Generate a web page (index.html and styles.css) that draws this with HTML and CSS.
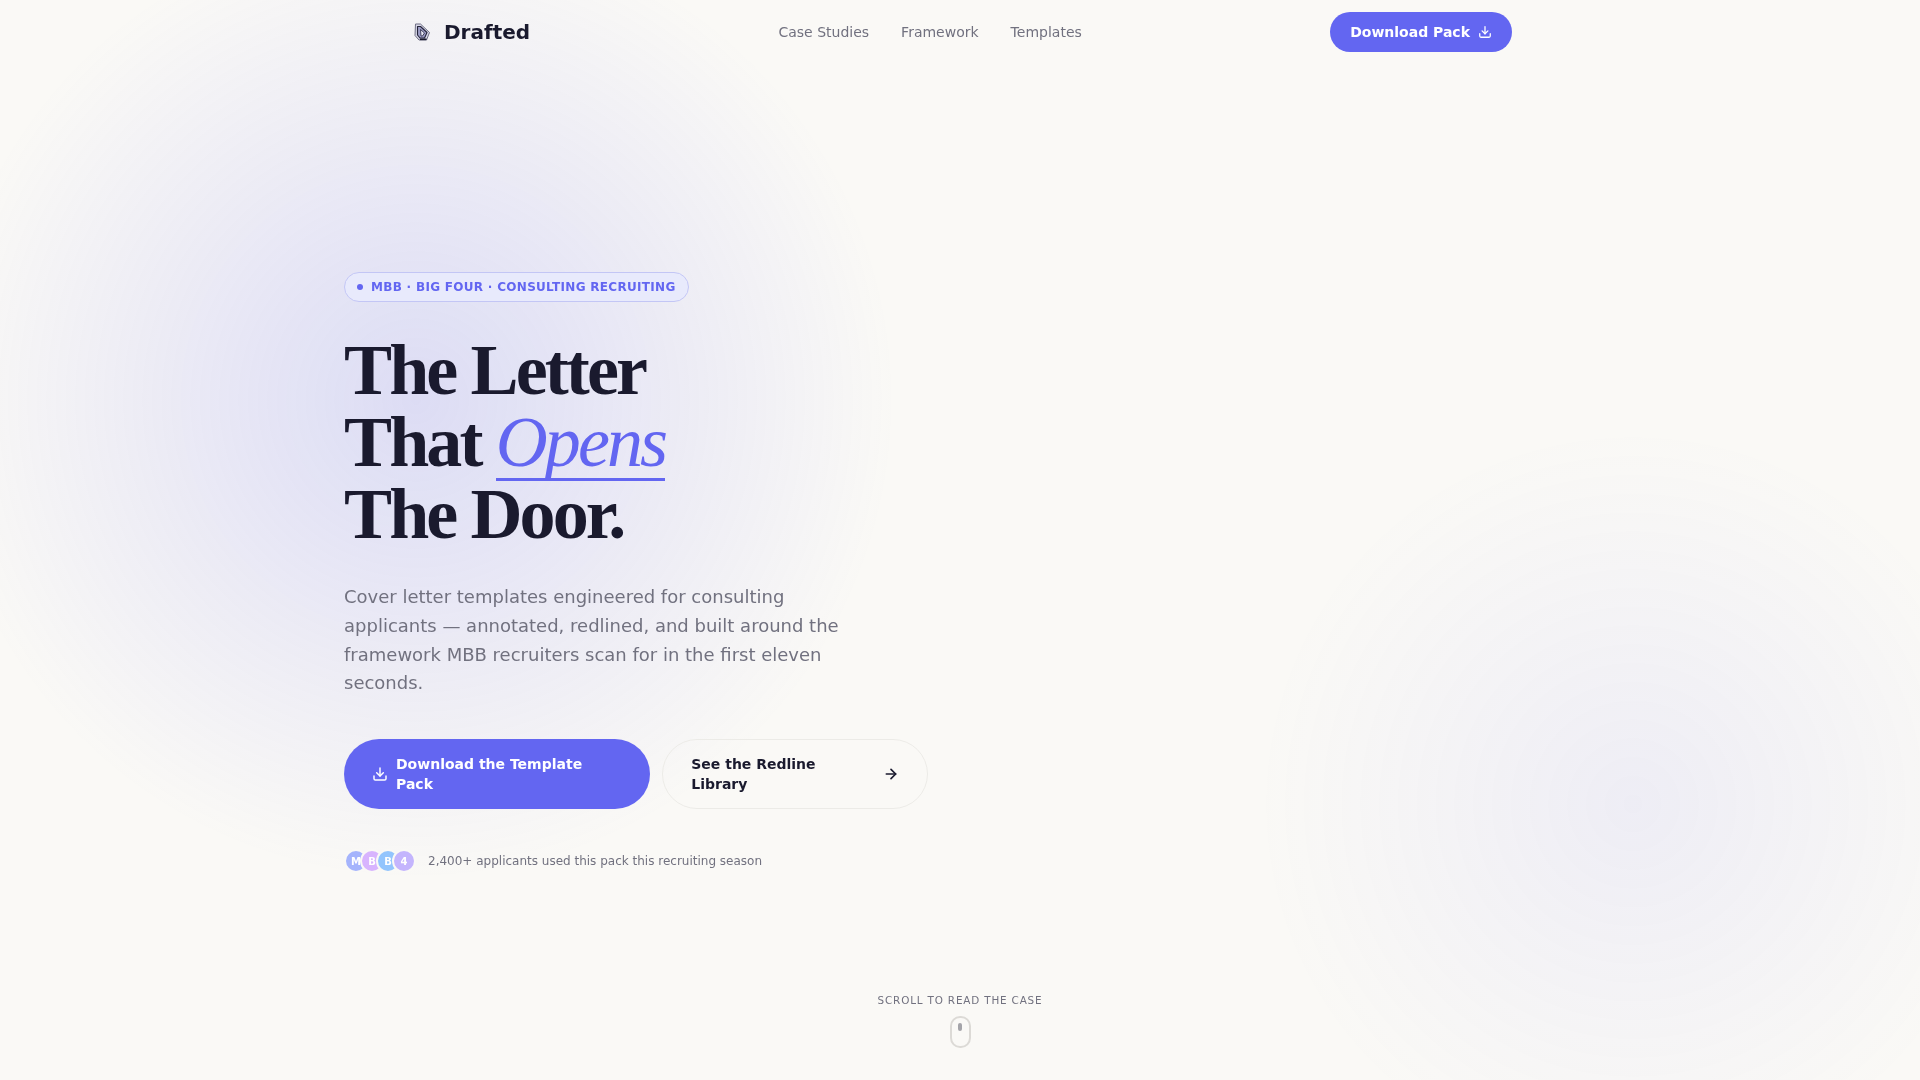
FILE: index.html
```html
<!DOCTYPE html>
<html lang="en">
<head>
<meta charset="utf-8">
<title>Drafted</title>
<link rel="stylesheet" href="styles.css">
</head>
<body>
<div class="backdrop">
  <div class="blob blob-left"></div>
  <div class="blob blob-right"></div>
</div>
<nav class="nav">
  <a class="logo" href="#">
    <svg class="logo-icon" viewBox="0 0 20 20" fill="none" stroke-linejoin="round">
      <path d="M3.500 2h5L17.500 10.500 14.500 18H7L3 13.500z" fill="#d6d6e6" stroke="#6f6f84" stroke-width="1"/>
      <path d="M5.500 4.500h3L15 10.500l-2.500 5.500H8L5.500 13z" fill="#9d9dc6" stroke="#24243a" stroke-width="1.100"/>
      <path d="M8.500 7.500l4 3.500-2 3H9z" fill="#e9e9f6" stroke="#33334e" stroke-width=".9"/>
      <path d="M8 17.300h6.500" stroke="#1a1a2e" stroke-width="1.600"/>
    </svg>
    <span>Drafted</span>
  </a>
  <div class="nav-links">
    <a href="#">Case Studies</a>
    <a href="#">Framework</a>
    <a href="#">Templates</a>
  </div>
  <a class="nav-cta" href="#">Download Pack
    <svg class="icon-sm" viewBox="0 0 24 24" fill="none" stroke="currentColor" stroke-width="2.2" stroke-linecap="round" stroke-linejoin="round"><path d="M21 15v4a2 2 0 0 1-2 2H5a2 2 0 0 1-2-2v-4"/><path d="M7 10l5 5 5-5"/><path d="M12 15V3"/></svg>
  </a>
</nav>
<main class="hero">
  <div class="hero-grid">
    <div class="hero-copy">
      <div class="badge"><span class="badge-dot"></span>MBB · BIG FOUR · CONSULTING RECRUITING</div>
      <h1>The Letter<br>That <em>Opens</em><br>The Door.</h1>
      <p class="lede">Cover letter templates engineered for consulting applicants — annotated, redlined, and built around the framework MBB recruiters scan for in the first eleven seconds.</p>
      <div class="actions">
        <a class="btn btn-primary" href="#">
          <svg class="icon-md" viewBox="0 0 24 24" fill="none" stroke="currentColor" stroke-width="2.2" stroke-linecap="round" stroke-linejoin="round"><path d="M21 15v4a2 2 0 0 1-2 2H5a2 2 0 0 1-2-2v-4"/><path d="M7 10l5 5 5-5"/><path d="M12 15V3"/></svg>
          <span>Download the Template Pack</span>
        </a>
        <a class="btn btn-ghost" href="#">
          <span>See the Redline Library</span>
          <svg class="icon-arrow" viewBox="0 0 24 24" fill="none" stroke="currentColor" stroke-width="2.500" stroke-linecap="round" stroke-linejoin="round"><path d="M5 12h14"/><path d="M12 5l7 7-7 7"/></svg>
        </a>
      </div>
      <div class="proof">
        <div class="avatars">
          <span class="avatar a1">M</span>
          <span class="avatar a2">B</span>
          <span class="avatar a3">B</span>
          <span class="avatar a4">4</span>
        </div>
        <span class="proof-text">2,400+ applicants used this pack this recruiting season</span>
      </div>
    </div>
    <div></div>
  </div>
  <div class="scroll-hint">
    <span>SCROLL TO READ THE CASE</span>
    <div class="mouse"><i></i></div>
  </div>
</main>
</body>
</html>
```

FILE: styles.css
```css
* { box-sizing: border-box; margin: 0; padding: 0; }
html, body { height: 100%; overflow: hidden; }
body {
  background: #faf9f6;
  color: #1a1a2e;
  font-family: "DejaVu Sans", sans-serif;
}
a { color: inherit; text-decoration: none; }

.backdrop { position: fixed; inset: 0; overflow: hidden; pointer-events: none; }
.blob { position: absolute; border-radius: 50%; }
.blob-left {
  left: -64px; top: -80px; width: 960px; height: 960px;
  background: radial-gradient(circle closest-side, rgba(99,102,241,.195), rgba(99,102,241,0));
}
.blob-right {
  left: 1257px; top: 428px; width: 752px; height: 752px;
  background: radial-gradient(circle closest-side, rgba(99,102,241,.08), rgba(99,102,241,0));
}

.nav {
  position: relative;
  height: 64px;
  max-width: 1200px;
  margin: 0 auto;
  padding: 0 48px;
  display: flex;
  align-items: center;
  justify-content: space-between;
}
.logo { display: flex; align-items: center; gap: 12px; font-size: 20px; font-weight: 700; }
.logo-icon { width: 20px; height: 20px; margin-left: 4px; }
.nav-links { display: flex; gap: 32px; font-size: 14px; color: #71717f; }
.nav-cta {
  display: flex; align-items: center; gap: 8px;
  height: 40px; padding: 0 20px;
  border-radius: 100px;
  background: #6366f1; color: #fff;
  font-size: 14px; font-weight: 700;
}
.icon-sm { width: 14px; height: 14px; flex: none; }
.icon-md { width: 16px; height: 16px; flex: none; }
.icon-arrow { width: 16px; height: 16px; flex: none; }

.hero {
  position: relative;
  height: 1016px;
  padding-top: 1px;
  display: flex;
  align-items: center;
  justify-content: center;
}
.hero-grid {
  width: 1232px;
  display: grid;
  grid-template-columns: 1fr 1fr;
  gap: 64px;
}
.hero-copy { display: flex; flex-direction: column; align-items: flex-start; }

.badge {
  display: flex; align-items: center; gap: 8px;
  height: 30px; padding: 0 12px;
  border: 1px solid #c3c6f5;
  border-radius: 100px;
  background: #e8eafc;
  color: #6366f1;
  font-size: 12px; font-weight: 700; letter-spacing: .025em;
}
.badge-dot { width: 6px; height: 6px; border-radius: 50%; background: #6366f1; }

h1 {
  margin-top: 32px;
  font-family: "Liberation Serif", serif;
  font-size: 72px; font-weight: 700; line-height: 1; letter-spacing: -.04em;
}
h1 em {
  position: relative;
  font-weight: 400; color: #6366f1;
}
h1 em::after {
  content: "";
  position: absolute; left: 0; right: 0; bottom: 1px;
  height: 3px;
  background: #6366f1;
}

.lede { margin-top: 33px; max-width: 520px; font-size: 18px; line-height: 1.6; color: #71717f; }

.actions { margin-top: 41px; display: flex; gap: 12px; width: 100%; }
.btn {
  display: flex; align-items: center; gap: 8px;
  padding: 15px 28px; border-radius: 100px;
  font-size: 14px; font-weight: 700; line-height: 20px;
}
.btn-primary { background: #6366f1; color: #fff; }
.btn-ghost { padding: 14px 28px; border: 1px solid #ecebe7; color: #1a1a2e; flex-shrink: 1.1; }

.proof { margin-top: 40px; display: flex; align-items: center; gap: 12px; }
.avatars { display: flex; }
.avatar {
  width: 24px; height: 24px; border-radius: 50%;
  display: flex; align-items: center; justify-content: center;
  border: 2px solid #faf9f6;
  margin-right: -8px;
  color: #fff; font-size: 10px; font-weight: 700;
}
.avatar:last-child { margin-right: 0; }
.a1 { background: #a5b4fc; }
.a2 { background: #d8b4fe; }
.a3 { background: #93c5fd; }
.a4 { background: #c4b5fd; }
.proof-text { font-size: 12px; color: #71717f; }

.scroll-hint {
  position: absolute; left: 0; right: 0; bottom: 32px;
  display: flex; flex-direction: column; align-items: center; gap: 10px;
  font-size: 10.4px; letter-spacing: .08em; color: #71717f;
}
.mouse { width: 21px; height: 32px; border: 2px solid #dcdad6; border-radius: 10px; display: flex; justify-content: center; padding-top: 5px; }
.mouse i { width: 4px; height: 8px; border-radius: 2px; background: #a4a4a9; }
```
